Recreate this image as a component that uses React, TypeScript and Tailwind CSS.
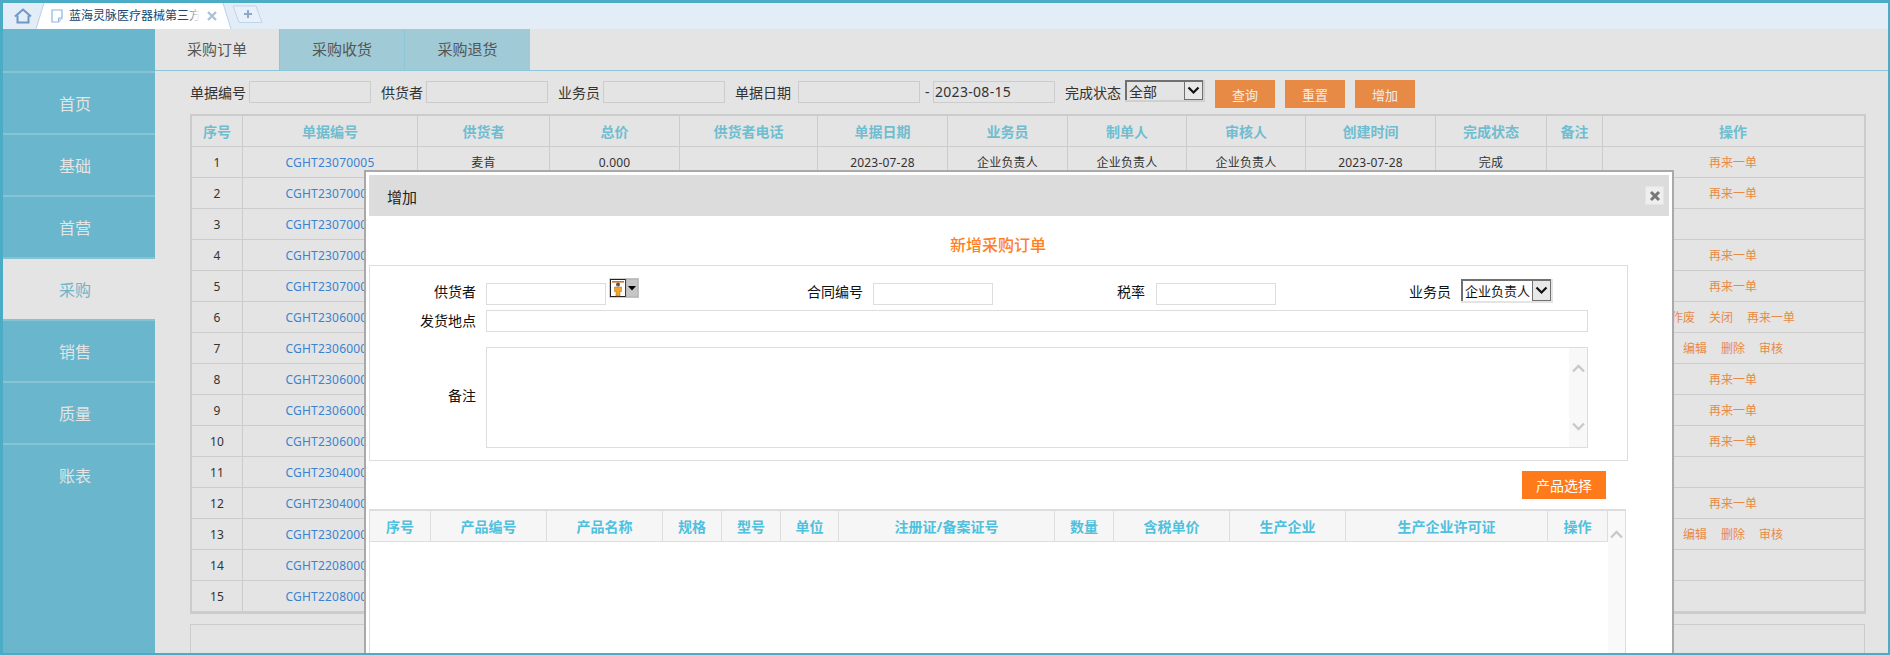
const rows = [
  { no: 1, code: "CGHT23070005", ops: ["再来一单"] },
  { no: 2, code: "CGHT23070004", ops: ["再来一单"] },
  { no: 3, code: "CGHT23070003", ops: [] },
  { no: 4, code: "CGHT23070002", ops: ["再来一单"] },
  { no: 5, code: "CGHT23070001", ops: ["再来一单"] },
  { no: 6, code: "CGHT23060005", ops: ["作废", "关闭", "再来一单"] },
  { no: 7, code: "CGHT23060004", ops: ["编辑", "删除", "审核"] },
  { no: 8, code: "CGHT23060003", ops: ["再来一单"] },
  { no: 9, code: "CGHT23060002", ops: ["再来一单"] },
  { no: 10, code: "CGHT23060001", ops: ["再来一单"] },
  { no: 11, code: "CGHT23040002", ops: [] },
  { no: 12, code: "CGHT23040001", ops: ["再来一单"] },
  { no: 13, code: "CGHT23020001", ops: ["编辑", "删除", "审核"] },
  { no: 14, code: "CGHT22080002", ops: [] },
  { no: 15, code: "CGHT22080001", ops: [] },
]

const orderHeads = [
  { label: "序号", w: "w-[51px]" },
  { label: "单据编号", w: "w-[175px]" },
  { label: "供货者", w: "w-[132px]" },
  { label: "总价", w: "w-[130px]" },
  { label: "供货者电话", w: "w-[138px]" },
  { label: "单据日期", w: "w-[130px]" },
  { label: "业务员", w: "w-[120px]" },
  { label: "制单人", w: "w-[119px]" },
  { label: "审核人", w: "w-[119px]" },
  { label: "创建时间", w: "w-[130px]" },
  { label: "完成状态", w: "w-[111px]" },
  { label: "备注", w: "w-[56px]" },
  { label: "操作", w: "w-[262px]" },
]

const productHeads = [
  { label: "序号", w: "w-[61px]" },
  { label: "产品编号", w: "w-[116px]" },
  { label: "产品名称", w: "w-[116px]" },
  { label: "规格", w: "w-[59px]" },
  { label: "型号", w: "w-[59px]" },
  { label: "单位", w: "w-[58px]" },
  { label: "注册证/备案证号", w: "w-[216px]" },
  { label: "数量", w: "w-[59px]" },
  { label: "含税单价", w: "w-[116px]" },
  { label: "生产企业", w: "w-[116px]" },
  { label: "生产企业许可证", w: "w-[202px]" },
  { label: "操作", w: "w-[60px]" },
]

const menu = ["首页", "基础", "首营", "采购", "销售", "质量", "账表"]

function Chevron({ up = false }: { up?: boolean }) {
  return (
    <svg width="13" height="9" viewBox="0 0 13 9" className="block">
      <path d={up ? "M1 7.5 L6.5 2 L12 7.5" : "M1 1.5 L6.5 7 L12 1.5"} fill="none" stroke="#c9c9c9" strokeWidth="2.4" />
    </svg>
  )
}

function FakeSelect({ value, outer, bg, text }: { value: string; outer: string; bg: string; text: string }) {
  return (
    <div className={`${outer} pr-[2px] pb-[2px]`}>
      <div className={`flex h-full border-l-2 border-t-2 border-[#707070] ${bg}`}>
        <span className={`flex-1 pl-[2px] ${text} leading-[20px] whitespace-nowrap overflow-hidden`}>{value}</span>
        <span className="w-[19px] flex items-center justify-center border border-[#707070] border-t-0 bg-[#e8e8e8]">
          <svg width="13" height="9" viewBox="0 0 13 9">
            <path d="M1.5 1.5 L6.5 6.5 L11.5 1.5" fill="none" stroke="#111" strokeWidth="2.2" />
          </svg>
        </span>
      </div>
    </div>
  )
}

function PersonPicker() {
  return (
    <svg width="30" height="20" viewBox="0 0 30 20" className="block">
      <rect width="30" height="20" fill="#d0d0d0" />
      <rect x="1.5" y="1.5" width="15" height="17" fill="#fff" stroke="#222" strokeWidth="1" />
      <rect x="3" y="3" width="12" height="1.6" fill="#d8730f" />
      <circle cx="9" cy="6.5" r="2" fill="#555" />
      <path d="M5.5 9 H12.5 V13.5 H11 V18 H7 V13.5 H5.5 Z" fill="#f2a72c" stroke="#a86a10" strokeWidth="0.5" />
      <rect x="17" y="1" width="12" height="18" fill="#c6c6c6" stroke="#999" strokeWidth="0.5" />
      <path d="M19 8 H27 L23 12.5 Z" fill="#000" />
    </svg>
  )
}

function FieldLabel({ text, w, extra = "" }: { text: string; w: string; extra?: string }) {
  return <label className={`${w} ${extra} shrink-0 text-right text-[14px] leading-[22px] text-[#111]`}>{text}</label>
}

export default function App() {
  return (
    <div
      className="relative h-[655px] overflow-hidden border-t-[3px] border-l-[3px] border-r-2 border-b-2 border-[#4bacc6] flex flex-col text-[#333]"
      style={{ fontFamily: '"Noto Sans", "Noto Sans CJK SC", sans-serif' }}
    >
      {/* browser tabs */}
      <div className="h-[26px] shrink-0 flex bg-[#e3edf8]">
        <div className="w-[33px] flex items-center justify-center pl-[6px]">
          <svg width="18" height="16" viewBox="0 0 18 16">
            <path d="M1 8.5 L9 1.5 L17 8.5" fill="none" stroke="#6f97c4" strokeWidth="2" />
            <path d="M3.5 7.5 V14.5 H14.5 V7.5" fill="none" stroke="#6f97c4" strokeWidth="2" />
          </svg>
        </div>
        <div className="relative w-[196px] flex items-center pl-[15px]">
          <svg width="196" height="26" viewBox="0 0 196 26" className="absolute left-0 top-0">
            <path d="M0 26 L8 0 H187 L195 26 Z" fill="#fff" />
            <path d="M0 26 L8 0 M187 0 L195 26" fill="none" stroke="#b9d0ea" />
          </svg>
          <svg width="12" height="14" viewBox="0 0 12 14" className="relative shrink-0">
            <path d="M1 1 H11 V9 L7.5 13 H1 Z" fill="#fff" stroke="#8db4e2" strokeWidth="1.2" />
            <path d="M7.5 13 V9 H11" fill="#dce8f6" stroke="#8db4e2" />
          </svg>
          <span className="relative ml-[6px] w-[131px] overflow-hidden whitespace-nowrap text-[12px] text-[#17466e]">
            蓝海灵脉医疗器械第三方
            <span className="absolute right-0 top-0 h-full w-[14px] bg-gradient-to-r from-transparent to-white"></span>
          </span>
          <svg width="10" height="10" viewBox="0 0 10 10" className="relative ml-[7px]">
            <path d="M1 1 L9 9 M9 1 L1 9" stroke="#a9bfd6" strokeWidth="2.2" />
          </svg>
        </div>
        <div className="mt-[2px]">
          <svg width="32" height="19" viewBox="0 0 32 19">
            <path d="M1 1 H24 L30 17.5 H7 Z" fill="#e8f0fa" stroke="#c0d4ea" />
            <path d="M12 9 H20 M16 5 V13" stroke="#8aa9cc" strokeWidth="2" />
          </svg>
        </div>
      </div>

      <div className="flex flex-1 min-h-0">
        {/* sidebar */}
        <aside className="w-[152px] shrink-0 bg-[#6ab6cc] pt-[42px]">
          {menu.map((item) => (
            <div
              key={item}
              className={`h-[62px] flex items-center justify-center pt-[2px] pr-[8px] text-[16px] border-t-2 border-[#85c3d5] ${item === "采购" ? "bg-[#e4e4e4] text-[#6ab6cc]" : "text-[#e4e4e4]"}`}
            >
              {item}
            </div>
          ))}
        </aside>

        {/* main */}
        <main className="flex-1 min-w-0 bg-[#e4e4e4] flex flex-col">
          <div className="h-[42px] shrink-0 flex border-b border-[#8cc6d8] text-[15px] text-[#555]">
            <div className="w-[124px] flex items-center justify-center">采购订单</div>
            <div className="w-[125px] flex items-center justify-center bg-[#9fcad6] border-l border-[#8cc6d8]">采购收货</div>
            <div className="w-[126px] flex items-center justify-center bg-[#9fcad6] border-l border-[#8cc6d8]">采购退货</div>
          </div>

          {/* filters */}
          <div className="h-[43px] shrink-0 flex items-start pt-[10px] pl-[35px] text-[14px] leading-[22px] whitespace-nowrap">
            <span className="pt-[1px]">单据编号</span>
            <input className="ml-[3px] w-[122px] h-[22px] border border-[#ccc] bg-transparent outline-none" />
            <span className="ml-[10px] pt-[1px]">供货者</span>
            <input className="ml-[3px] w-[122px] h-[22px] border border-[#ccc] bg-transparent outline-none" />
            <span className="ml-[10px] pt-[1px]">业务员</span>
            <input className="ml-[3px] w-[122px] h-[22px] border border-[#ccc] bg-transparent outline-none" />
            <span className="ml-[10px] pt-[1px]">单据日期</span>
            <input className="ml-[7px] w-[122px] h-[22px] border border-[#ccc] bg-transparent outline-none" />
            <span className="ml-[5px] w-[8px]">-</span>
            <input
              readOnly
              value="2023-08-15"
              className="w-[122px] h-[22px] border border-[#ccc] bg-transparent outline-none pl-[1px] text-[14px] tracking-[0.3px] text-[#333]"
            />
            <span className="ml-[10px] pt-[1px]">完成状态</span>
            <div className="ml-[4px] -mt-px">
              <FakeSelect value="全部" outer="w-[80px] h-[22px] bg-[#cfcfcf]" bg="bg-[#e4e4e4]" text="text-[14px]" />
            </div>
            <button className="ml-[10px] -mt-px pt-[2px] w-[60px] h-[28px] bg-[#e68a46] text-[13px] text-[#eee]">查询</button>
            <button className="ml-[10px] -mt-px pt-[2px] w-[60px] h-[28px] bg-[#e68a46] text-[13px] text-[#eee]">重置</button>
            <button className="ml-[10px] -mt-px pt-[2px] w-[60px] h-[28px] bg-[#e68a46] text-[13px] text-[#eee]">增加</button>
          </div>

          {/* order table */}
          <div className="ml-[35px] w-[1676px] shrink-0 border-2 border-[#ccc]">
            <table className="w-[1672px] table-fixed border-separate border-spacing-0">
              <thead>
                <tr>
                  {orderHeads.map((h) => (
                    <th key={h.label} className={`${h.w} h-[31px] p-0 border-b border-r border-[#ccc] text-[14px] font-bold text-[#6fbdd0] last:border-r-0 last:pr-[2px]`}>
                      {h.label}
                    </th>
                  ))}
                </tr>
              </thead>
              <tbody className="text-[12px] tracking-[0.2px] text-center text-[#333]">
                {rows.map((r) => (
                  <tr key={r.no}>
                    <td className="h-[31px] p-0 pt-px border-b border-r border-[#ccc]">{r.no}</td>
                    <td className="p-0 pt-px border-b border-r border-[#ccc] text-[#3a83d0]">{r.code}</td>
                    <td className="p-0 pt-px border-b border-r border-[#ccc]">{r.no === 1 ? "麦肯" : ""}</td>
                    <td className="p-0 pt-px border-b border-r border-[#ccc]">{r.no === 1 ? "0.000" : ""}</td>
                    <td className="p-0 pt-px border-b border-r border-[#ccc]"></td>
                    <td className="p-0 pt-px border-b border-r border-[#ccc]">{r.no === 1 ? "2023-07-28" : ""}</td>
                    <td className="p-0 pt-px border-b border-r border-[#ccc]">{r.no === 1 ? "企业负责人" : ""}</td>
                    <td className="p-0 pt-px border-b border-r border-[#ccc]">{r.no === 1 ? "企业负责人" : ""}</td>
                    <td className="p-0 pt-px border-b border-r border-[#ccc]">{r.no === 1 ? "企业负责人" : ""}</td>
                    <td className="p-0 pt-px border-b border-r border-[#ccc]">{r.no === 1 ? "2023-07-28" : ""}</td>
                    <td className="p-0 pt-px border-b border-r border-[#ccc]">{r.no === 1 ? "完成" : ""}</td>
                    <td className="p-0 pt-px border-b border-r border-[#ccc]"></td>
                    <td className="p-0 pt-px border-b border-[#ccc] text-[#e88a45]">
                      <div className="flex justify-center gap-[14px] pr-[2px] tracking-normal">
                        {r.ops.map((op) => (
                          <span key={op}>{op}</span>
                        ))}
                      </div>
                    </td>
                  </tr>
                ))}
              </tbody>
            </table>
          </div>

          {/* pager box, cut off by the window */}
          <div className="ml-[35px] mt-[10px] w-[1675px] h-[80px] shrink-0 border border-[#ccc]"></div>
        </main>
      </div>

      {/* dialog */}
      <div className="absolute left-[361px] top-[167px] w-[1310px] h-[500px] border-2 border-[#a9a9a9] bg-white p-[3px]">
        <div className="h-[41px] flex items-center justify-between bg-[#dcdcdc] pl-[18px] pr-[5px]">
          <span className="pt-[3px] text-[15px] text-[#222]">增加</span>
          <span className="w-[19px] h-[19px] flex items-center justify-center bg-[#efefef] border border-[#e4e4e4]">
            <svg width="12" height="12" viewBox="0 0 12 12">
              <path d="M2 2 L10 10 M10 2 L2 10" stroke="#777" strokeWidth="3" />
            </svg>
          </span>
        </div>
        <h2 className="h-[49px] pt-[17px] pl-[581px] text-[16px] leading-[24px] font-medium text-[#ff7f1f]">新增采购订单</h2>

        <div className="w-[1259px] h-[196px] border border-[#ddd] pt-[17px]">
          <div className="flex items-start h-[22px]">
            <FieldLabel text="供货者" w="w-[106px]" extra="-mt-[2px]" />
            <input className="ml-[10px] w-[120px] h-[22px] border border-[#ddd] outline-none" />
            <div className="ml-[3px] -mt-[5px]">
              <PersonPicker />
            </div>
            <FieldLabel text="合同编号" w="w-[224px]" extra="-mt-[2px]" />
            <input className="ml-[10px] w-[120px] h-[22px] border border-[#ddd] outline-none" />
            <FieldLabel text="税率" w="w-[152px]" extra="-mt-[2px]" />
            <input className="ml-[11px] w-[120px] h-[22px] border border-[#ddd] outline-none" />
            <FieldLabel text="业务员" w="w-[175px]" extra="-mt-[2px]" />
            <div className="ml-[10px] -mt-[4px] text-[#111]">
              <FakeSelect value="企业负责人" outer="w-[92px] h-[24px] bg-[#e4e4e4]" bg="bg-white" text="text-[13px]" />
            </div>
          </div>
          <div className="flex items-start mt-[5px]">
            <FieldLabel text="发货地点" w="w-[106px]" />
            <input className="ml-[10px] w-[1102px] h-[22px] border border-[#ddd] outline-none" />
          </div>
          <div className="flex items-center mt-[15px]">
            <FieldLabel text="备注" w="w-[106px]" extra="-mt-[4px]" />
            <div className="ml-[10px] w-[1102px] h-[101px] border border-[#ddd] flex justify-end">
              <div className="w-[18px] bg-[#f8f8f8] flex flex-col items-center justify-between pt-[16px] pb-[16px]">
                <Chevron up />
                <Chevron />
              </div>
            </div>
          </div>
        </div>

        <button className="block ml-[1153px] mt-[10px] w-[84px] h-[28px] bg-[#ff7a1a] text-[14px] text-white">产品选择</button>

        {/* product table */}
        <div className="mt-[10px] flex w-[1257px] h-[200px] border-t-2 border-l border-[#ddd]">
          <table className="w-[1238px] h-fit table-fixed border-separate border-spacing-0">
            <thead>
              <tr>
                {productHeads.map((h) => (
                  <th key={h.label} className={`${h.w} h-[31px] p-0 bg-[#f6f6f6] border-b border-r border-[#ddd] text-[14px] font-bold text-[#4fc0dd]`}>
                    {h.label}
                  </th>
                ))}
              </tr>
            </thead>
          </table>
          <div className="w-[18px] bg-[#f9f9f9] border-r border-[#ddd] pt-[19px] flex justify-center items-start">
            <Chevron up />
          </div>
        </div>
      </div>
    </div>
  )
}
